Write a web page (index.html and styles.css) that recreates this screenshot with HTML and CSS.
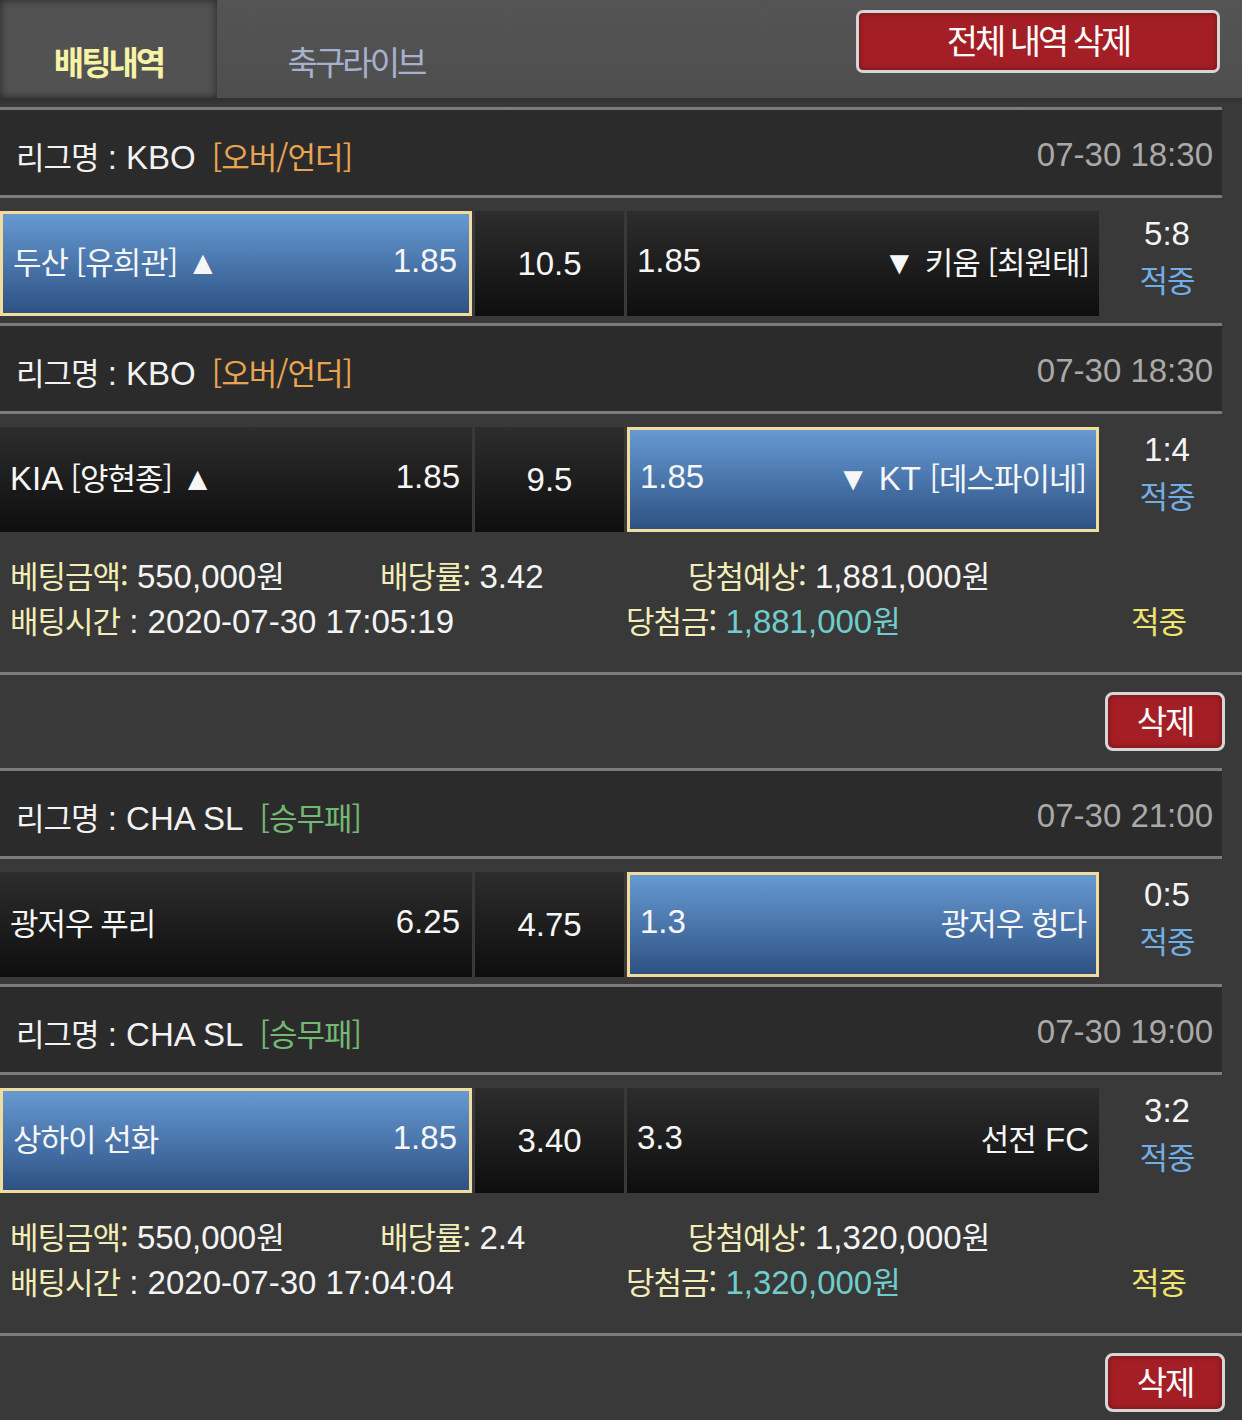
FILE: index.html
```html
<!DOCTYPE html>
<html lang="ko">
<head>
<meta charset="utf-8">
<title>배팅내역</title>
<link rel="stylesheet" href="styles.css">
</head>
<body>
<div class="page">
  <header class="topbar">
    <nav class="tabs">
      <div class="tab active"><span class="ko">배팅내역</span></div>
      <div class="tab"><span class="ko">축구라이브</span></div>
    </nav>
    <button class="btn-all"><span class="ko">전체 내역 삭제</span></button>
  </header>
  <div class="strip"></div>

  <section class="group">
    <div class="match">
      <div class="league">
        <span class="lname"><span class="ko">리그명</span> : KBO</span>
        <span class="ltype ou"><span class="ko">[오버/언더]</span></span>
        <span class="ldate">07-30 18:30</span>
      </div>
      <div class="bet-row">
        <div class="cell side selected"><span><span class="ko">두산 [유희관]</span> ▲</span><span>1.85</span></div>
        <div class="cell mid">10.5</div>
        <div class="cell side away"><span>1.85</span><span>▼ <span class="ko">키움 [최원태]</span></span></div>
        <div class="score"><div>5:8</div><div class="hit ko">적중</div></div>
      </div>
    </div>
    <div class="match">
      <div class="league">
        <span class="lname"><span class="ko">리그명</span> : KBO</span>
        <span class="ltype ou"><span class="ko">[오버/언더]</span></span>
        <span class="ldate">07-30 18:30</span>
      </div>
      <div class="bet-row">
        <div class="cell side"><span>KIA <span class="ko">[양현종]</span> ▲</span><span>1.85</span></div>
        <div class="cell mid">9.5</div>
        <div class="cell side away selected"><span>1.85</span><span>▼ KT <span class="ko">[데스파이네]</span></span></div>
        <div class="score"><div>1:4</div><div class="hit ko">적중</div></div>
      </div>
    </div>
    <div class="info">
      <div class="info-line">
        <span class="i-amount"><span class="lbl ko">베팅금액:</span> 550,000<span class="ko">원</span></span>
        <span class="i-odds"><span class="lbl ko">배당률:</span> 3.42</span>
        <span><span class="lbl ko">당첨예상:</span> 1,881,000<span class="ko">원</span></span>
      </div>
      <div class="info-line">
        <span class="i-time"><span class="lbl ko">배팅시간</span> : 2020-07-30 17:05:19</span>
        <span class="i-win"><span class="lbl ko">당첨금:</span> <span class="teal">1,881,000<span class="ko">원</span></span></span>
        <span class="result ko">적중</span>
      </div>
    </div>
    <div class="del-row"><button class="btn-del"><span class="ko">삭제</span></button></div>
  </section>

  <section class="group">
    <div class="match">
      <div class="league">
        <span class="lname"><span class="ko">리그명</span> : CHA SL</span>
        <span class="ltype wdl"><span class="ko">[승무패]</span></span>
        <span class="ldate">07-30 21:00</span>
      </div>
      <div class="bet-row">
        <div class="cell side"><span class="ko">광저우 푸리</span><span>6.25</span></div>
        <div class="cell mid">4.75</div>
        <div class="cell side away selected"><span>1.3</span><span class="ko">광저우 헝다</span></div>
        <div class="score"><div>0:5</div><div class="hit ko">적중</div></div>
      </div>
    </div>
    <div class="match">
      <div class="league">
        <span class="lname"><span class="ko">리그명</span> : CHA SL</span>
        <span class="ltype wdl"><span class="ko">[승무패]</span></span>
        <span class="ldate">07-30 19:00</span>
      </div>
      <div class="bet-row">
        <div class="cell side selected"><span class="ko">상하이 선화</span><span>1.85</span></div>
        <div class="cell mid">3.40</div>
        <div class="cell side away"><span>3.3</span><span><span class="ko">선전</span> FC</span></div>
        <div class="score"><div>3:2</div><div class="hit ko">적중</div></div>
      </div>
    </div>
    <div class="info">
      <div class="info-line">
        <span class="i-amount"><span class="lbl ko">베팅금액:</span> 550,000<span class="ko">원</span></span>
        <span class="i-odds"><span class="lbl ko">배당률:</span> 2.4</span>
        <span><span class="lbl ko">당첨예상:</span> 1,320,000<span class="ko">원</span></span>
      </div>
      <div class="info-line">
        <span class="i-time"><span class="lbl ko">배팅시간</span> : 2020-07-30 17:04:04</span>
        <span class="i-win"><span class="lbl ko">당첨금:</span> <span class="teal">1,320,000<span class="ko">원</span></span></span>
        <span class="result ko">적중</span>
      </div>
    </div>
    <div class="del-row"><button class="btn-del"><span class="ko">삭제</span></button></div>
  </section>
</div>
</body>
</html>
```
FILE: styles.css
```css
* { box-sizing: border-box; }

html, body {
  margin: 0;
  padding: 0;
  background: #393939;
}

body {
  font-family: "Liberation Sans", "Noto Sans CJK KR", sans-serif;
  font-size: 33px;
  color: #f4f4f4;
  width: 1242px;
  overflow: hidden;
}

.ko {
  font-family: "Noto Sans CJK KR", sans-serif;
  letter-spacing: -1px;
  font-size: 31px;
}

/* ---------- header ---------- */
.topbar {
  height: 98px;
  display: flex;
  align-items: flex-start;
  justify-content: space-between;
  background: linear-gradient(180deg, #545454 0%, #4e4e4e 100%);
}

.tabs {
  display: flex;
  height: 98px;
}

.tab {
  height: 98px;
  display: flex;
  align-items: center;
  justify-content: center;
  padding-top: 24px;
  color: #a7b0cc;
  width: 278px;
}

.tab .ko {
  font-size: 33px;
  letter-spacing: -3px;
}

.tab.active {
  width: 217px;
  background: #525252;
  box-shadow: inset 0 0 8px rgba(0, 0, 0, 0.55);
  color: #f6f2a6;
}

.tab.active .ko {
  font-weight: 700;
  letter-spacing: -3px;
}

.btn-all {
  margin: 10px 22px 0 0;
  width: 364px;
  height: 63px;
  background: #a41f25;
  border: 3px solid #d6d6d6;
  border-radius: 7px;
  color: #fbfbfb;
  box-shadow: inset 0 0 6px rgba(0, 0, 0, 0.35);
  padding: 0 0 4px 0;
  font-family: inherit;
}

.btn-all .ko {
  font-size: 34px;
  letter-spacing: -3px;
}

.strip {
  height: 9px;
  background: linear-gradient(180deg, #303030, #3b3b3b);
}

/* ---------- match ---------- */
.league {
  width: 1222px;
  height: 91px;
  border-top: 3px solid #7b7b7b;
  border-bottom: 3px solid #7b7b7b;
  background: #2b2b2b;
  display: flex;
  align-items: center;
  padding: 5px 9px 0 16px;
}

.lname { color: #f2f2f2; }
.ltype { margin-left: 16px; }
.ou { color: #e9a453; }
.wdl { color: #73b873; }
.ldate {
  margin-left: auto;
  color: #a9a9a9;
}

.bet-row {
  display: flex;
  padding: 13px 0 7px 0;
}

.cell {
  height: 105px;
  background: linear-gradient(180deg, #2d2d2d 0%, #0e0e0e 100%);
  display: flex;
  align-items: center;
  color: #f6f6f6;
  padding-bottom: 6px;
}

.cell.side {
  width: 472px;
  justify-content: space-between;
  padding-left: 10px;
  padding-right: 12px;
}

.cell.away {
  padding-left: 10px;
  padding-right: 10px;
}

.cell.mid {
  width: 149px;
  margin: 0 3px;
  justify-content: center;
  padding-top: 6px;
}

.cell.selected {
  background: linear-gradient(180deg, #6699d1 0%, #4a76ac 50%, #2e5182 100%);
  border: 3px solid #f1dc9c;
}

.score {
  width: 136px;
  text-align: center;
  line-height: 45px;
  color: #f4f4f4;
}

.hit { color: #72aee6; }

/* ---------- info ---------- */
.info {
  height: 136px;
  border-bottom: 3px solid #7b7b7b;
  padding: 13px 0 0 10px;
}

.info-line {
  display: flex;
  line-height: 45px;
  height: 45px;
  align-items: baseline;
}

.lbl { color: #f3edb7; }
.i-amount { width: 370px; }
.i-odds { width: 308px; }
.i-time { width: 616px; }
.i-win { width: 505px; }
.teal { color: #71cccc; }
.result { color: #f2e36e; }

/* ---------- delete ---------- */
.del-row {
  height: 93px;
  display: flex;
  justify-content: flex-end;
  align-items: center;
  padding-right: 17px;
}

.btn-del {
  width: 120px;
  height: 59px;
  background: #a41f25;
  border: 3px solid #d6d6d6;
  border-radius: 8px;
  color: #fbfbfb;
  box-shadow: inset 0 0 6px rgba(0, 0, 0, 0.35);
  padding: 0 0 4px 0;
  font-family: inherit;
}

.btn-del .ko {
  font-size: 33px;
  letter-spacing: -2px;
}
```
